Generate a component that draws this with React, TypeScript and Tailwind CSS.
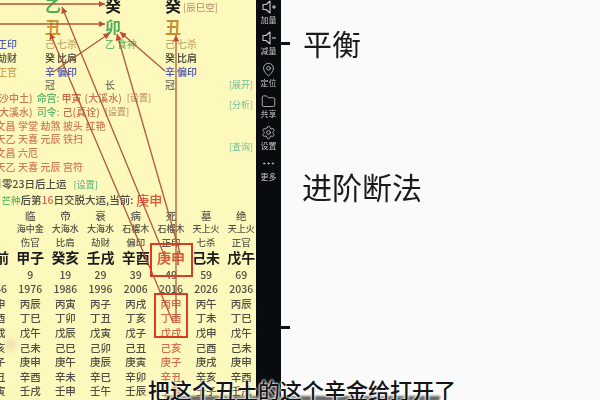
import { MapPin, Folder, Settings, Ellipsis } from 'lucide-react';

const sans = "font-['Noto_Sans_CJK_SC',sans-serif]";

type Hidden = { stem: string; god: string; color: string };

const pillars: { stem: string; stemColor: string; branch: string; branchColor: string; hidden: Hidden[]; phase: string; note?: string }[] = [
  {
    stem: '', stemColor: '', branch: '', branchColor: '', phase: '',
    hidden: [
      { stem: '己', god: '正印', color: 'text-[#4f5cb8]' },
      { stem: '癸', god: '劫财', color: 'text-[#4a4a3a]' },
      { stem: '辛', god: '正官', color: 'text-[#c8a455]' },
    ],
  },
  {
    stem: '乙', stemColor: 'text-[#4fae5c]', branch: '丑', branchColor: 'text-[#cf9a30]', phase: '冠',
    hidden: [
      { stem: '己', god: '七杀', color: 'text-[#c4aa68]' },
      { stem: '癸', god: '比肩', color: 'text-[#3f3f33]' },
      { stem: '辛', god: '偏印', color: 'text-[#4650b4]' },
    ],
  },
  {
    stem: '癸', stemColor: 'text-[#1c1c1c]', branch: '卯', branchColor: 'text-[#4fae5c]', phase: '长',
    hidden: [{ stem: '乙', god: '食神', color: 'text-[#6dbb72]' }],
  },
  {
    stem: '癸', stemColor: 'text-[#1c1c1c]', branch: '丑', branchColor: 'text-[#c58f35]', phase: '冠', note: '[辰巳空]',
    hidden: [
      { stem: '己', god: '七杀', color: 'text-[#c4aa68]' },
      { stem: '癸', god: '比肩', color: 'text-[#3f3f33]' },
      { stem: '辛', god: '偏印', color: 'text-[#4650b4]' },
    ],
  },
];

const phases = ['', '临', '帝', '衰', '病', '死', '墓', '绝'];
const naYin = ['', '海中金', '大海水', '大海水', '石榴木', '石榴木', '天上火', '天上火'];
const gods = ['', '伤官', '比肩', '劫财', '偏印', '正印', '七杀', '正官'];
const luck = ['运前', '甲子', '癸亥', '壬戌', '辛酉', '庚申', '己未', '戊午'];
const ages = ['', '9', '19', '29', '39', '49', '59', '69'];
const years = ['1966', '1976', '1986', '1996', '2006', '2016', '2026', '2036'];
const flow = [
  ['丙申', '丙辰', '丙寅', '丙子', '丙戌', '丙申', '丙午', '丙辰'],
  ['丁酉', '丁巳', '丁卯', '丁丑', '丁亥', '丁酉', '丁未', '丁巳'],
  ['戊戌', '戊午', '戊辰', '戊寅', '戊子', '戊戌', '戊申', '戊午'],
  ['己亥', '己未', '己巳', '己卯', '己丑', '己亥', '己酉', '己未'],
  ['庚子', '庚申', '庚午', '庚辰', '庚寅', '庚子', '庚戌', '庚申'],
  ['辛丑', '辛酉', '辛未', '辛巳', '辛卯', '辛丑', '辛亥', '辛酉'],
  ['壬寅', '壬戌', '壬申', '壬午', '壬辰', '壬寅', '壬子', '壬戌'],
];

function Speaker({ plus }: { plus?: boolean }) {
  return (
    <svg width="16" height="16" viewBox="0 0 16 16" fill="none" stroke="currentColor" strokeWidth="1.1">
      <path d="M9 2 5 5.5H2v5h3L9 14z" strokeLinejoin="round" />
      <path d="M11 8h4" />
      {plus && <path d="M13 6v4" />}
    </svg>
  );
}

function SideItem({ icon, label }: { icon: React.ReactNode; label: string }) {
  return (
    <div className="h-[31.4px] flex flex-col items-center justify-start">
      <div className="h-[16px] flex items-center justify-center">{icon}</div>
      <span className="text-[8px] leading-[10px] text-[#c4c4c4]">{label}</span>
    </div>
  );
}

export default function App() {
  return (
    <div className={`w-[600px] h-[400px] relative overflow-hidden flex bg-[#fafafa] ${sans}`}>
      <div className="w-[256px] h-full relative overflow-hidden bg-[#fdf8bc] blur-[0.55px] shrink-0">
        <div className="flex -ml-[15px] -mt-[5px]">
          {pillars.map((p, i) => (
            <div key={i} className="w-[60px] shrink-0 flex flex-col">
              <div className="h-[20px] flex items-center whitespace-nowrap">
                <span className={`text-[16px] font-bold ${p.stemColor}`}>{p.stem}</span>
                {p.note && <span className="text-[9.5px] ml-[2px] mt-[4px] text-[#bd8a6d]">{p.note}</span>}
              </div>
              <div className={`h-[21px] flex items-center text-[16px] font-bold ${p.branchColor}`}>{p.branch}</div>
              <div className="h-[42px] flex flex-col">
                {p.hidden.map((h, j) => (
                  <div key={j} className="h-[14px] flex items-center text-[10px] font-medium whitespace-nowrap">
                    <span className={h.color}>{h.stem}</span>
                    <span className={`ml-[2px] ${h.color}`}>{h.god}</span>
                  </div>
                ))}
              </div>
              <div className="h-[13px] flex items-center text-[10px] text-[#55554a]">{p.phase}</div>
            </div>
          ))}
          <div className="w-[60px] shrink-0 flex flex-col">
            <div className="h-[83px]" />
            <div className="h-[13px] flex items-center pl-[4px] text-[9px] text-[#6cbf9a]">[展开]</div>
          </div>
        </div>

        <div className="flex">
          <div className="-ml-[4.5px] w-[233.5px] shrink-0 flex flex-col text-[10px] font-medium whitespace-nowrap">
            <div className="h-[13.7px] flex items-center text-[#c8765a]">
              <span>(沙中土)</span>
              <span className="ml-[4px] text-[#63b26b]">命宫:</span>
              <span className="ml-[2px] text-[#d2654e]">甲寅</span>
              <span className="ml-[3px]">(大溪水)</span>
              <span className="ml-[5px] text-[9px] text-[#c0906a]">[设置]</span>
            </div>
            <div className="h-[13.7px] flex items-center text-[#c8765a]">
              <span>(大溪水)</span>
              <span className="ml-[4px] text-[#63b26b]">司令:</span>
              <span className="ml-[3px] text-[#c96a4e]">己(真诠)</span>
              <span className="ml-[5px] text-[9px] text-[#c0906a]">[设置]</span>
            </div>
            <div className="h-[13.7px] flex items-center gap-[2.5px] text-[#cf7a5a]">
              <span>文昌</span><span>学堂</span><span>劫煞</span><span>披头</span><span>红艳</span>
            </div>
            <div className="h-[13.7px] flex items-center gap-[2.5px] text-[#cf7a5a]">
              <span>天乙</span><span>天喜</span><span>元辰</span><span>铁扫</span>
            </div>
            <div className="h-[13.7px] flex items-center gap-[2.5px] text-[#cf7a5a]">
              <span>文昌</span><span>六厄</span>
            </div>
            <div className="h-[13.7px] flex items-center gap-[2.5px] text-[#cf7a5a]">
              <span>天乙</span><span>天喜</span><span>元辰</span><span>宫符</span>
            </div>
            <div className="h-[19.4px] flex items-center pt-[3px] -ml-[14.5px] text-[#4c4c40] text-[10.5px]">
              <span>个月零23日后上运</span>
              <span className="ml-[7px] text-[9px] text-[#63b88c]">[设置]</span>
            </div>
            <div className="h-[12.6px] flex items-center text-[#4c4c40] text-[10.5px] pl-[6px] mt-[1px]">
              <span className="text-[#5cb866] text-[9.5px]">芒种</span>
              <span>后第</span>
              <span className="text-[#d2654e]">16</span>
              <span>日交脱大运,当前:</span>
              <span className="ml-[3px] text-[13px] text-[#dc5a3e]">庚申</span>
            </div>
          </div>
          <div className="flex flex-col text-[9px] text-[#6cbf9a]">
            <div className="h-[7px]" />
            <div className="h-[13px] flex items-center">[分析]</div>
            <div className="h-[29px]" />
            <div className="h-[13px] flex items-center">[查询]</div>
          </div>
        </div>

        <div className="-ml-[22.6px] mt-[3.2px] w-[281.6px] grid grid-cols-[repeat(8,35.2px)] text-center whitespace-nowrap">
          {phases.map((t, i) => (
            <div key={i} className="h-[13px] flex items-center justify-center text-[10.5px] font-medium text-[#5d5d50]">{t}</div>
          ))}
          {naYin.map((t, i) => (
            <div key={i} className="h-[13px] flex items-center justify-center text-[9px] font-medium text-[#4f4f44]">{t}</div>
          ))}
          {gods.map((t, i) => (
            <div key={i} className="h-[13px] flex items-center justify-center text-[9.5px] font-medium text-[#5d5d50]">{t}</div>
          ))}
          {luck.map((t, i) => (
            <div key={i} className={`h-[19px] flex items-center justify-center text-[14px] font-bold ${i === 5 ? 'text-[#dc5a3e]' : 'text-[#1c1c1c]'}`}>{t}</div>
          ))}
          {ages.map((t, i) => (
            <div key={i} className="h-[15px] flex items-center justify-center text-[10.5px] font-medium text-[#4f4f44]">{t}</div>
          ))}
          {years.map((t, i) => (
            <div key={i} className="h-[14px] flex items-center justify-center text-[10.5px] font-medium text-[#4f4f44]">{t}</div>
          ))}
          {flow.flat().map((t, i) => (
            <div key={i} className={`h-[14.6px] flex items-center justify-center text-[10.5px] font-medium ${i % 8 === 5 ? 'text-[#d56b50]' : 'text-[#4f4f44]'}`}>{t}</div>
          ))}
        </div>

        <svg className="absolute inset-0" width="256" height="400" viewBox="0 0 256 400" fill="none" stroke="#b0583f" strokeWidth="1.3">
          <defs>
            <marker id="head" markerWidth="6" markerHeight="6" refX="5" refY="2.5" orient="auto">
              <path d="M0 0 5 2.5 0 5z" fill="#c4492f" stroke="none" />
            </marker>
          </defs>
          <path d="M0 4H105" markerEnd="url(#head)" />
          <path d="M0 24H105" markerEnd="url(#head)" />
          <path d="M53 72 110 33" markerEnd="url(#head)" />
          <path d="M165 71 120 32" markerEnd="url(#head)" />
          <path d="M165 257 62 7" markerEnd="url(#head)" />
          <path d="M173 322 50 33" markerEnd="url(#head)" />
          <path d="M180 253 117 34" markerEnd="url(#head)" />
          <path d="M176 322V35" markerEnd="url(#head)" />
        </svg>

        <div className="absolute left-[150px] top-[243px] w-[43px] h-[34px] border-2 border-[#d93c24]" />
        <div className="absolute left-[154px] top-[293px] w-[34px] h-[45px] border-2 border-[#d93c24]" />
        <div className="absolute left-[6px] top-[340px] w-[10px] h-[10px] rounded-full bg-[#e8dcae] blur-[3px]" />
      </div>

      <div className="w-[25px] h-full shrink-0 bg-[#090c0e] text-[#c8c8c8]">
        <div className="flex flex-col items-center -mt-[1px] blur-[0.4px]">
          <SideItem icon={<Speaker plus />} label="加量" />
          <SideItem icon={<Speaker />} label="减量" />
          <SideItem icon={<MapPin size={15} strokeWidth={1.3} />} label="定位" />
          <SideItem icon={<Folder size={15} strokeWidth={1.3} />} label="共享" />
          <SideItem icon={<Settings size={15} strokeWidth={1.3} />} label="设置" />
          <SideItem icon={<Ellipsis size={15} strokeWidth={1.5} />} label="更多" />
        </div>
      </div>

      <div className="flex-1 flex flex-col pt-[23px] blur-[0.4px] text-[#1b1b1b]">
        <div className="h-[40px] flex items-center">
          <div className="w-[9px] h-[3px] bg-[#111]" />
          <span className="ml-[13px] text-[29px] leading-none">平衡</span>
        </div>
        <div className="h-[40px] mt-[103px] flex items-center pl-[21px]">
          <span className="text-[30px] leading-none">进阶断法</span>
        </div>
        <div className="w-[9px] h-[3px] mt-[120px] bg-[#111]" />
      </div>

      <div className="absolute left-[165px] top-[396px] w-[275px] h-[5px] bg-[#666] blur-[1px]" />
      <div className="absolute left-[148px] top-[374px] text-[22px] font-medium leading-[30px] whitespace-nowrap text-[#141414] [text-shadow:0_0_2px_#fff,0_0_2px_#fff,0_0_3px_#fff]">
        把这个丑土的这个辛金给打开了
      </div>
    </div>
  );
}
